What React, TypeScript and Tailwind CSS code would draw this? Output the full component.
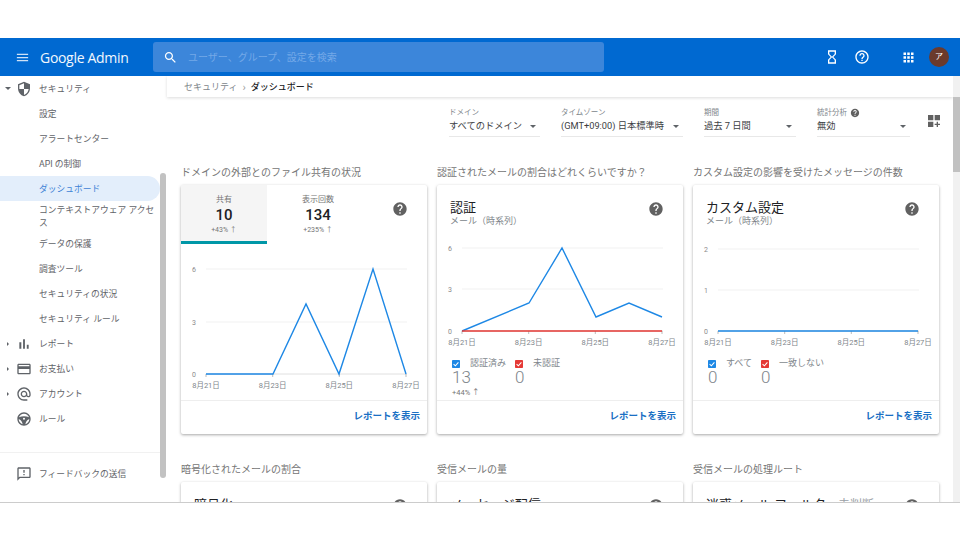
import { ReactNode } from 'react'

const P = {
  menu: 'M3 18h18v-2H3v2zm0-5h18v-2H3v2zm0-7v2h18V6H3z',
  search:
    'M15.5 14h-.79l-.28-.27C15.41 12.59 16 11.11 16 9.5 16 5.91 13.09 3 9.5 3S3 5.91 3 9.5 5.91 16 9.5 16c1.61 0 3.09-.59 4.23-1.57l.27.28v.79l5 4.99L20.49 19l-4.99-5zm-6 0C7.01 14 5 11.99 5 9.5S7.01 5 9.5 5 14 7.01 14 9.5 11.99 14 9.5 14z',
  hourglass:
    'M6 2v6h.01L6 8.01 10 12l-4 4 .01.01H6V22h12v-5.99h-.01L18 16l-4-4 4-3.99-.01-.01H18V2H6zm10 14.5V20H8v-3.5l4-4 4 4zm-4-5l-4-4V4h8v3.5l-4 4z',
  helpOutline:
    'M11 18h2v-2h-2v2zm1-16C6.48 2 2 6.48 2 12s4.48 10 10 10 10-4.48 10-10S17.52 2 12 2zm0 18c-4.41 0-8-3.59-8-8s3.59-8 8-8 8 3.59 8 8-3.59 8-8 8zm0-14c-2.21 0-4 1.79-4 4h2c0-1.1.9-2 2-2s2 .9 2 2c0 2-3 1.75-3 5h2c0-2.25 3-2.5 3-5 0-2.21-1.79-4-4-4z',
  help:
    'M12 2C6.48 2 2 6.48 2 12s4.48 10 10 10 10-4.48 10-10S17.52 2 12 2zm1 17h-2v-2h2v2zm2.07-7.75l-.9.92C13.45 12.9 13 13.5 13 15h-2v-.5c0-1.1.45-2.1 1.17-2.83l1.24-1.26c.37-.36.59-.86.59-1.41 0-1.1-.9-2-2-2s-2 .9-2 2H8c0-2.21 1.79-4 4-4s4 1.79 4 4c0 .88-.36 1.68-.93 2.25z',
  apps: 'M4 8h4V4H4v4zm6 12h4v-4h-4v4zm-6 0h4v-4H4v4zm0-6h4v-4H4v4zm6 0h4v-4h-4v4zm6-10v4h4V4h-4zm-6 4h4V4h-4v4zm6 6h4v-4h-4v4zm0 6h4v-4h-4v4z',
  bars: 'M5 9.2h3V19H5zM10.6 5h2.8v14h-2.8zm5.6 8H19v6h-2.8z',
  card: 'M20 4H4c-1.11 0-1.99.89-1.99 2L2 18c0 1.11.89 2 2 2h16c1.11 0 2-.89 2-2V6c0-1.11-.89-2-2-2zm0 14H4v-6h16v6zm0-10H4V6h16v2z',
  at: 'M12 2C6.48 2 2 6.48 2 12s4.48 10 10 10h5v-2h-5c-4.34 0-8-3.66-8-8s3.66-8 8-8 8 3.66 8 8v1.43c0 .79-.71 1.57-1.5 1.57s-1.5-.78-1.5-1.57V12c0-2.76-2.24-5-5-5s-5 2.24-5 5 2.24 5 5 5c1.38 0 2.64-.56 3.54-1.47.65.89 1.77 1.47 2.96 1.47 1.97 0 3.5-1.6 3.5-3.57V12c0-5.52-4.48-10-10-10zm0 13c-1.66 0-3-1.34-3-3s1.34-3 3-3 3 1.34 3 3-1.34 3-3 3z',
  shield:
    'M12 1L3 5v6c0 5.55 3.84 10.74 9 12 5.16-1.26 9-6.45 9-12V5l-9-4zm0 10.99h7c-.53 4.12-3.28 7.79-7 8.94V12H5V6.3l7-3.11v8.8z',
  wheel:
    'M12 2C6.48 2 2 6.48 2 12s4.48 10 10 10 10-4.48 10-10S17.52 2 12 2zm0 2c3.5 0 6.5 2.3 7.6 5.5-2.2-.9-4.8-1.5-7.6-1.5s-5.4.6-7.6 1.5C5.500 6.300 8.500 4 12 4zM4 12.500c2 .2 5 2 6 7.300-3.300-.8-5.800-3.800-6-7.300zm8 .500a1.500 1.500 0 1 1 0-3 1.500 1.500 0 0 1 0 3zm2 6.800c1-5.300 4-7.100 6-7.300-.2 3.500-2.700 6.500-6 7.300z',
  feedback:
    'M20 2H4c-1.1 0-1.99.9-1.99 2L2 22l4-4h14c1.1 0 2-.9 2-2V4c0-1.1-.9-2-2-2zm0 14H5.170L4 17.170V4h16v12zm-9-4h2v2h-2zm0-6h2v4h-2z',
  widgets: 'M3 3h8v8H3zM13 3h8v8h-8zM3 13h8v8H3zM16 13h2v3h3v2h-3v3h-2v-3h-3v-2h3z',
}

function Icon({ d, className }: { d: string; className: string }) {
  return (
    <svg viewBox="0 0 24 24" className={className} fill="currentColor">
      <path d={d} />
    </svg>
  )
}

function Caret({ className }: { className: string }) {
  return <span className={`w-0 h-0 border-x-[3px] border-x-transparent border-t-[3px] ${className}`}></span>
}

function NavItem({ label, active }: { label: string; active?: boolean }) {
  return (
    <div
      className={`h-[25px] flex items-center pl-[39px] pt-[2px] rounded-r-full text-[8.75px] ${
        active ? 'bg-[#e3eefb] text-[#3f83d6]' : 'text-[#5f6368]'
      }`}
    >
      {label}
    </div>
  )
}

function NavGroup({ icon, label, arrow, open }: { icon: string; label: string; arrow?: boolean; open?: boolean }) {
  return (
    <div className="h-[25px] flex items-center text-[8.75px] text-[#5f6368]">
      <div className="w-[16px] flex justify-center">
        {arrow &&
          (open ? (
            <Caret className="border-t-[#5f6368]" />
          ) : (
            <span className="w-0 h-0 border-y-[2.5px] border-y-transparent border-l-[2.5px] border-l-[#5f6368]"></span>
          ))}
      </div>
      <Icon d={icon} className="w-[16px] h-[16px] text-[#5f6368]" />
      <span className="ml-[7px] pt-[2px]">{label}</span>
    </div>
  )
}

function Sidebar() {
  return (
    <div className="w-[167px] shrink-0 flex">
      <div className="w-[160px] flex flex-col">
        <NavGroup icon={P.shield} label="セキュリティ" arrow open />
        <NavItem label="設定" />
        <NavItem label="アラートセンター" />
        <NavItem label="API の制御" />
        <NavItem label="ダッシュボード" active />
        <div className="h-[30px] flex items-center pl-[39px] pr-[2px] pt-[1px] text-[8.75px] leading-[13px] text-[#5f6368]">
          コンテキストアウェア アクセス
        </div>
        <NavItem label="データの保護" />
        <NavItem label="調査ツール" />
        <NavItem label="セキュリティの状況" />
        <NavItem label="セキュリティ ルール" />
        <NavGroup icon={P.bars} label="レポート" arrow />
        <NavGroup icon={P.card} label="お支払い" arrow />
        <NavGroup icon={P.at} label="アカウント" arrow />
        <NavGroup icon={P.wheel} label="ルール" />
        <div className="mt-[21px] h-[42px] border-t border-[#f1f1f1] flex items-center pl-[16px] text-[8.75px] text-[#5f6368]">
          <Icon d={P.feedback} className="w-[16px] h-[16px]" />
          <span className="ml-[7px] pt-[2px]">フィードバックの送信</span>
        </div>
      </div>
      <div className="w-[7px]">
        <div className="mt-[97px] h-[305px] w-[6px] rounded-full bg-[#c2c2c2]"></div>
      </div>
    </div>
  )
}

function Filter({ label, value, width, help }: { label: string; value: string; width: string; help?: boolean }) {
  return (
    <div className={`${width} border-b border-[#e8e8e8] pb-[3px]`}>
      <div className="flex items-center gap-[3px] h-[10px] pt-[1px] text-[7.5px] leading-[10px] text-[#80868b]">
        {label}
        {help && <Icon d={P.help} className="w-[10px] h-[10px] text-[#616161]" />}
      </div>
      <div className="mt-[2px] h-[14px] flex items-center justify-between pr-[3px] text-[9.25px] leading-[14px] text-[#3c4043]">
        <span className="whitespace-nowrap">{value}</span>
        <Caret className="border-t-[#5f6368] mr-[1px]" />
      </div>
    </div>
  )
}

function Chart({
  height,
  originX,
  grid,
  lines,
}: {
  height: number
  originX: number
  grid: [string, number][]
  lines: { color: string; points: string; width?: number }[]
}) {
  const base = grid[grid.length - 1][1]
  const ticks = [0, 66.7, 133.3, 200]
  const dates = ['8月21日', '8月23日', '8月25日', '8月27日']
  return (
    <svg width="246" height={height} className="block shrink-0">
      {grid.map(([label, y]) => (
        <g key={label}>
          <line x1={originX} x2={originX + 201} y1={y} y2={y} stroke={label === '0' ? '#e0e0e0' : '#f1f1f1'} strokeWidth="1" />
          <text x={originX - 12} y={y + 3} fontSize="7" fill="#8a8a8a" textAnchor="middle">
            {label}
          </text>
        </g>
      ))}
      {ticks.map((t, i) => (
        <g key={t}>
          <line x1={originX + t} x2={originX + t} y1={base} y2={base + 3} stroke="#9e9e9e" strokeWidth="0.7" />
          <text x={originX + t} y={base + 14} fontSize="7.500" fill="#80868b" textAnchor="middle">
            {dates[i]}
          </text>
        </g>
      ))}
      {lines.map((l) => (
        <polyline key={l.color} points={l.points} fill="none" stroke={l.color} strokeWidth={l.width ?? 1.4} />
      ))}
    </svg>
  )
}

function Check({ red }: { red?: boolean }) {
  return (
    <svg viewBox="0 0 10 10" className="w-[8px] h-[8px] shrink-0">
      <rect width="10" height="10" rx="1" fill={red ? '#e53935' : '#1e88e5'} />
      <path d="M2 5.200 4.200 7.300 8 3" stroke="#fff" strokeWidth="1.300" fill="none" />
    </svg>
  )
}

function Footer() {
  return (
    <div className="h-[34px] border-t border-[#eeeeee] flex items-center justify-end pr-[7px] pb-[2px] text-[9.500px] font-bold text-[#1a6fc4]">
      レポートを表示
    </div>
  )
}

function Section({ title, children }: { title: string; children: ReactNode }) {
  return (
    <div className="flex flex-col">
      <div className="h-[18px] mb-[4px] pt-[1px] text-[10px] leading-[18px] text-[#757575] whitespace-nowrap">
        {title}
      </div>
      {children}
    </div>
  )
}

function Card({ children }: { children: ReactNode }) {
  return <div className="h-[249px] bg-white rounded-[2px] shadow-[0_1px_3px_rgba(0,0,0,0.35)] flex flex-col">{children}</div>
}

function CardHead({ title, sub, extra }: { title: string; sub?: string; extra?: string }) {
  return (
    <div className="h-[47px] shrink-0 pl-[13px] pr-[19px] pt-[14px] flex justify-between">
      <div>
        <div className="text-[13px] leading-[17px] text-[#202124] whitespace-nowrap">
          {title}
          {extra && <span className="text-[12px] text-[#9aa0a6] ml-[12px]">{extra}</span>}
        </div>
        {sub && <div className="text-[9px] leading-[11px] text-[#80868b]">{sub}</div>}
      </div>
      <Icon d={P.help} className="w-[16px] h-[16px] mt-[2px] text-[#616161]" />
    </div>
  )
}

function Tab({
  label,
  value,
  delta,
  width,
  active,
}: {
  label: string
  value: string
  delta: string
  width: string
  active?: boolean
}) {
  return (
    <div
      className={`${width} h-[59px] flex flex-col items-center pt-[10px] border-b-[3px] ${
        active ? 'bg-[#f5f5f5] border-[#0097a7]' : 'border-transparent'
      }`}
    >
      <div className="text-[8px] leading-[10px] text-[#757575]">{label}</div>
      <div className="text-[15px] leading-[20px] font-medium text-[#202124]">{value}</div>
      <div className="pt-[1px] text-[7px] leading-[9px] text-[#757575]">{delta}</div>
    </div>
  )
}

function Legend({ a, b, av, bv, gap, delta }: { a: string; b: string; av: string; bv: string; gap: string; delta?: string }) {
  return (
    <div className="h-[50px] pl-[15px] pt-[8px] shrink-0">
      <div className="flex">
        <div className={gap}>
          <div className="flex items-center gap-[10px] h-[12px] text-[9px] text-[#80868b]">
            <Check />
            {a}
          </div>
          <div className="text-[17px] leading-[14px] font-light text-[#80868b]">{av}</div>
        </div>
        <div>
          <div className="flex items-center gap-[10px] h-[12px] text-[9px] text-[#80868b]">
            <Check red />
            {b}
          </div>
          <div className="text-[17px] leading-[14px] font-light text-[#80868b]">{bv}</div>
        </div>
      </div>
      {delta && <div className="mt-[4px] text-[7.500px] leading-[10px] text-[#757575]">{delta}</div>}
    </div>
  )
}

export default function App() {
  return (
    <div
      className="w-[960px] h-[540px] overflow-hidden bg-white flex flex-col"
      style={{ fontFamily: 'Roboto, "Noto Sans CJK JP", sans-serif' }}
    >
      <div className="h-[38px] shrink-0"></div>

      <header className="h-[38px] shrink-0 bg-[#0069d1] flex items-center text-white">
        <Icon d={P.menu} className="ml-[15px] w-[15px] h-[15px] text-[#cfe2f7]" />
        <span className="ml-[10px] w-[113px] text-[14px] tracking-[-0.3px] font-['Open_Sans'] text-[#f2f7fd]">Google Admin</span>
        <div className="w-[451px] h-[30px] rounded-[3px] bg-[#3c86da] flex items-center pl-[10px]">
          <Icon d={P.search} className="w-[15px] h-[15px] text-white" />
          <span className="ml-[10px] pt-[1px] text-[10px] text-[#74a9e8]">ユーザー、グループ、設定を検索</span>
        </div>
        <Icon d={P.hourglass} className="ml-[220px] w-[16px] h-[16px]" />
        <Icon d={P.helpOutline} className="ml-[14px] w-[16px] h-[16px]" />
        <Icon d={P.apps} className="ml-[31px] w-[15px] h-[15px]" />
        <div className="ml-[13px] w-[20px] h-[20px] rounded-full bg-[#6b3a2c] flex items-center justify-center text-[8px]">
          ア
        </div>
      </header>

      <main className="h-[426px] shrink-0 flex overflow-hidden">
        <Sidebar />

        <div className="w-[786px] shrink-0 flex flex-col">
          <div className="h-[21px] shrink-0 pt-[2px] shadow-[0_1px_3px_rgba(0,0,0,0.14)] flex items-center pl-[17px] text-[9px] text-[#80868b]">
            セキュリティ
            <span className="mx-[5px] text-[11px] leading-[11px] text-[#9e9e9e]">›</span>
            <span className="text-[#202124] font-medium">ダッシュボード</span>
          </div>

          <div className="h-[66px] shrink-0 pt-[10px] pl-[282px] flex items-start gap-[21px]">
            <Filter label="ドメイン" value="すべてのドメイン" width="w-[91px]" />
            <Filter label="タイムゾーン" value="(GMT+09:00) 日本標準時" width="w-[122px]" />
            <Filter label="期間" value="過去 7 日間" width="w-[92px]" />
            <Filter label="統計分析" value="無効" width="w-[93px]" help />
            <Icon d={P.widgets} className="-ml-[5px] mt-[6px] w-[16px] h-[16px] text-[#616161]" />
          </div>

          <div className="pl-[14px] grid grid-cols-[246px_246px_246px] gap-x-[10px] gap-y-[26px]">
            <Section title="ドメインの外部とのファイル共有の状況">
              <Card>
                <div className="flex h-[59px] shrink-0">
                  <Tab label="共有" value="10" delta="+43% ↑" width="w-[86px]" active />
                  <Tab label="表示回数" value="134" delta="+235% ↑" width="w-[102px]" />
                  <Icon d={P.help} className="ml-[23px] mt-[16px] w-[16px] h-[16px] text-[#616161]" />
                </div>
                <div className="flex-1">
                  <Chart
                    height={156}
                    originX={25}
                    grid={[
                      ['6', 25],
                      ['3', 78],
                      ['0', 130],
                    ]}
                    lines={[{ color: '#1e88e5', points: '25,130 92,130 125,60 158,130 192,25 225,130' }]}
                  />
                </div>
                <Footer />
              </Card>
            </Section>

            <Section title="認証されたメールの割合はどれくらいですか？">
              <Card>
                <CardHead title="認証" sub="メール（時系列）" />
                <Chart
                  height={118}
                  originX={25}
                  grid={[
                    ['6', 16],
                    ['3', 57],
                    ['0', 99],
                  ]}
                  lines={[
                    { color: '#1e88e5', points: '25,99 92,71 125,16 159,85 192,71 225,85' },
                    { color: '#e53935', points: '25,99 225,99' },
                  ]}
                />
                <Legend a="認証済み" b="未認証" av="13" bv="0" gap="w-[63px]" delta="+44% ↑" />
                <Footer />
              </Card>
            </Section>

            <Section title="カスタム設定の影響を受けたメッセージの件数">
              <Card>
                <CardHead title="カスタム設定" sub="メール（時系列）" />
                <Chart
                  height={118}
                  originX={25}
                  grid={[
                    ['2', 17],
                    ['1', 58],
                    ['0', 99],
                  ]}
                  lines={[{ color: '#1e88e5', points: '25,99 225,99' }]}
                />
                <Legend a="すべて" b="一致しない" av="0" bv="0" gap="w-[53px]" />
                <Footer />
              </Card>
            </Section>

            <Section title="暗号化されたメールの割合">
              <Card>
                <CardHead title="暗号化" />
              </Card>
            </Section>
            <Section title="受信メールの量">
              <Card>
                <CardHead title="メッセージ配信" />
              </Card>
            </Section>
            <Section title="受信メールの処理ルート">
              <Card>
                <CardHead title="迷惑メール フィルタ" extra="未判断" />
              </Card>
            </Section>
          </div>
        </div>

        <div className="w-[7px] shrink-0 bg-[#f1f1f1]">
          <div className="mt-[21px] h-[75px] bg-[#c1c1c1]"></div>
        </div>
      </main>

      <div className="flex-1 border-t border-[#cccccc]"></div>
    </div>
  )
}
